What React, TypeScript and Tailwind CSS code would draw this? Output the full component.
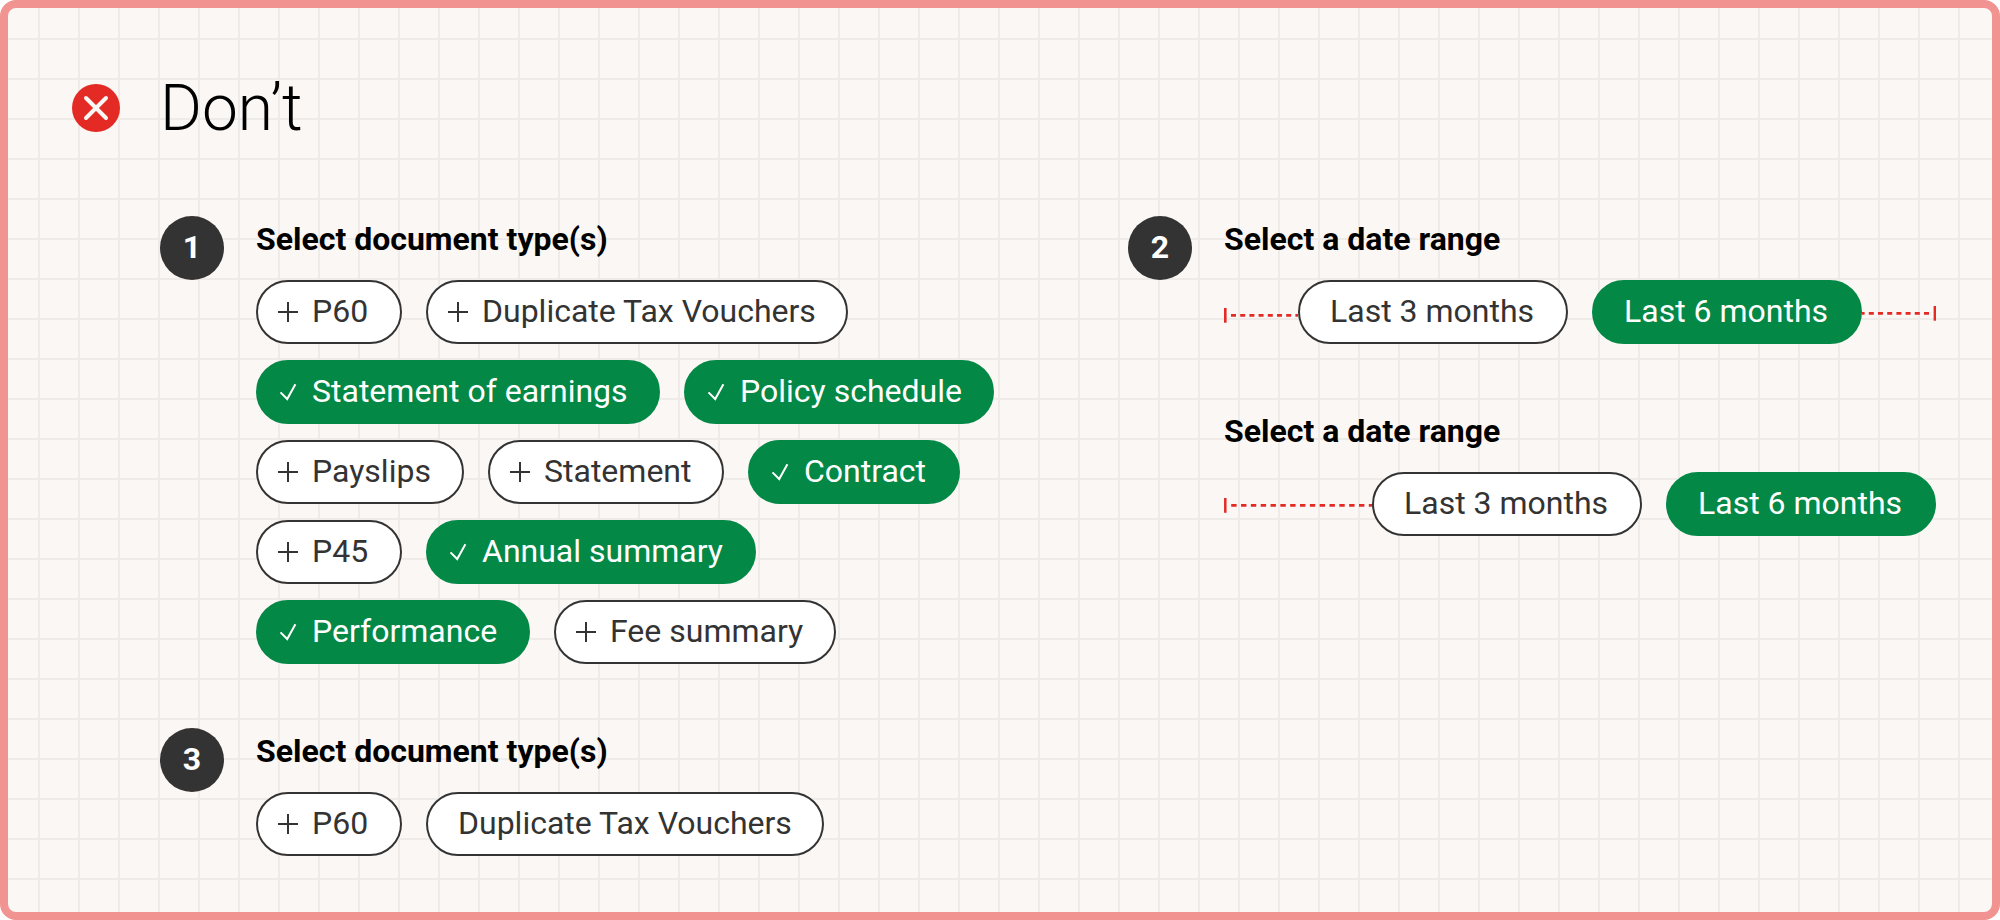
import type { ReactNode } from "react";

function PlusIcon() {
  return (
    <svg className="size-8 shrink-0" viewBox="0 0 32 32" fill="none" stroke="currentColor" strokeWidth="2">
      <path d="M6 16H26M16 6V26" />
    </svg>
  );
}

function CheckIcon() {
  return (
    <svg className="size-8 shrink-0" viewBox="0 0 32 32" fill="none" stroke="currentColor" strokeWidth="2">
      <path d="M8.5 16.4L15.2 23L23.4 8.2" />
    </svg>
  );
}

type ChipProps = { label: string; width: string; selected?: boolean; icon?: boolean };

function Chip({ label, width, selected = false, icon = true }: ChipProps) {
  const tone = selected ? "bg-[#048846] border-[#048846] text-white" : "bg-white border-[#333333] text-[#333333]";
  const pad = icon ? "pl-3.5" : "pl-[30px]";
  return (
    <button
      type="button"
      className={`flex h-16 shrink-0 items-center gap-2 rounded-full border-2 pb-0 text-[32px] leading-[48px] whitespace-nowrap ${tone} ${pad} ${width}`}
    >
      {icon && (selected ? <CheckIcon /> : <PlusIcon />)}
      <span className="pb-0.5">{label}</span>
    </button>
  );
}

function Group({ title, children }: { title: string; children: ReactNode }) {
  return (
    <div className="flex flex-col gap-4">
      <h2 className="-mt-px mb-px text-[32px] leading-[48px] font-bold text-black">{title}</h2>
      {children}
    </div>
  );
}

function Row({ children }: { children: ReactNode }) {
  return <div className="flex gap-6">{children}</div>;
}

function Step({ n, children }: { n: number; children: ReactNode }) {
  return (
    <section className="flex items-start gap-8">
      <div className="flex size-16 shrink-0 items-center justify-center rounded-full bg-[#333333] pb-0.5 text-[32px] leading-[48px] font-bold text-white">
        {n}
      </div>
      {children}
    </section>
  );
}

export default function App() {
  return (
    <div className="h-[920px] w-[2000px] bg-white font-['Roboto',sans-serif]">
      <main className="h-full w-full rounded-2xl border-8 border-[#f19390] bg-[#fbf7f4] bg-[linear-gradient(#efebe8_2px,transparent_2px),linear-gradient(90deg,#efebe8_2px,transparent_2px)] bg-[size:40px_40px] bg-[position:30px_30px] bg-origin-padding pt-[68px] pl-16">
        <header className="flex h-16 items-center gap-10">
          <svg className="size-12" viewBox="0 0 48 48" fill="none">
            <circle cx="24" cy="24" r="24" fill="#e32a24" />
            <path d="M14 14L34 34M34 14L14 34" stroke="#fbf7f4" strokeWidth="4" strokeLinecap="round" />
          </svg>
          <h1 className="pt-0.5 text-[64px] leading-[64px] font-light text-black">Don’t</h1>
        </header>
        <div className="flex pt-[76px] pl-[88px]">
          <div className="flex w-[968px] flex-col gap-16">
            <Step n={1}>
              <Group title="Select document type(s)">
                <div className="flex flex-col gap-4">
                  <Row>
                    <Chip label="P60" width="w-[146px]" />
                    <Chip label="Duplicate Tax Vouchers" width="w-[422px]" />
                  </Row>
                  <Row>
                    <Chip label="Statement of earnings" width="w-[404px]" selected />
                    <Chip label="Policy schedule" width="w-[310px]" selected />
                  </Row>
                  <Row>
                    <Chip label="Payslips" width="w-[208px]" />
                    <Chip label="Statement" width="w-[236px]" />
                    <Chip label="Contract" width="w-[212px]" selected />
                  </Row>
                  <Row>
                    <Chip label="P45" width="w-[146px]" />
                    <Chip label="Annual summary" width="w-[330px]" selected />
                  </Row>
                  <Row>
                    <Chip label="Performance" width="w-[274px]" selected />
                    <Chip label="Fee summary" width="w-[282px]" />
                  </Row>
                </div>
              </Group>
            </Step>
            <Step n={3}>
              <Group title="Select document type(s)">
                <Row>
                  <Chip label="P60" width="w-[146px]" />
                  <Chip label="Duplicate Tax Vouchers" width="w-[398px]" icon={false} />
                </Row>
              </Group>
            </Step>
          </div>
          <Step n={2}>
            <div className="flex w-[712px] flex-col gap-16">
              <Group title="Select a date range">
                <div className="flex">
                  <svg className="h-16 w-[74px] shrink-0" viewBox="0 0 74 64" fill="none" stroke="#e32a24">
                    <path d="M1.3 28V42.7" strokeWidth="2.6" />
                    <path d="M7 35.4H74" strokeWidth="2.7" strokeDasharray="5 4.2" />
                  </svg>
                  <Row>
                    <Chip label="Last 3 months" width="w-[270px]" icon={false} />
                    <Chip label="Last 6 months" width="w-[270px]" icon={false} selected />
                  </Row>
                  <svg className="h-16 w-[74px] shrink-0" viewBox="0 0 74 64" fill="none" stroke="#e32a24">
                    <path d="M72.8 26V40.7" strokeWidth="2.4" />
                    <path d="M67 33.4H0" strokeWidth="2.7" strokeDasharray="5 4.2" />
                  </svg>
                </div>
              </Group>
              <Group title="Select a date range">
                <div className="flex">
                  <svg className="h-16 w-[148px] shrink-0" viewBox="0 0 148 64" fill="none" stroke="#e32a24">
                    <path d="M1.3 26V40.8" strokeWidth="2.5" />
                    <path d="M7.2 33.4H148" strokeWidth="2.7" strokeDasharray="5.4 4.43" />
                  </svg>
                  <Row>
                    <Chip label="Last 3 months" width="w-[270px]" icon={false} />
                    <Chip label="Last 6 months" width="w-[270px]" icon={false} selected />
                  </Row>
                </div>
              </Group>
            </div>
          </Step>
        </div>
      </main>
    </div>
  );
}
